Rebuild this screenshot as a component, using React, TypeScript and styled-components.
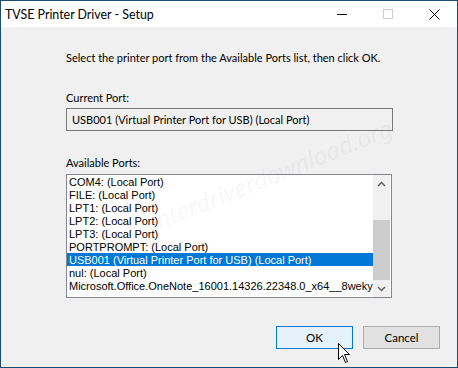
import React from "react";
import styled, { createGlobalStyle } from "styled-components";

const GlobalStyle = createGlobalStyle`
  html, body { margin: 0; padding: 0; background: #f0f0f0; }
  * { box-sizing: border-box; }
`;

const Window = styled.div`
  position: relative;
  width: 458px;
  height: 368px;
  border: 1px solid #1b4d72;
  background: #f0f0f0;
  display: flex;
  flex-direction: column;
  overflow: hidden;
  font-family: Lato, "Noto Sans", sans-serif;
  font-size: 11px;
  color: #000;
`;

const TitleBar = styled.div`
  height: 26px;
  background: #fff;
  display: flex;
  align-items: center;
  flex-shrink: 0;
`;

const Title = styled.div`
  flex: 1;
  padding-left: 4px;
  font-size: 12.4px;
  white-space: nowrap;
`;

const CaptionButton = styled.div`
  width: 46px;
  height: 26px;
  display: flex;
  align-items: center;
  justify-content: center;
`;

const Body = styled.div`
  flex: 1;
  display: flex;
  flex-direction: column;
  padding: 0 17px 0 65px;
`;

const Label = styled.div<{ $top: number }>`
  margin-top: ${(p) => p.$top}px;
  line-height: 16px;
  height: 16px;
  white-space: nowrap;
`;

const ReadOnlyBox = styled.div`
  margin-top: 2px;
  width: 327px;
  height: 23px;
  border: 1px solid #7a7a7a;
  background: #f0f0f0;
  display: flex;
  align-items: center;
  padding-left: 5px;
  white-space: nowrap;
`;

const ListBox = styled.div`
  margin-top: 3px;
  width: 326px;
  height: 124px;
  border: 1px solid #828790;
  background: #fff;
  display: flex;
  font-family: "Liberation Sans", Arial, sans-serif;
  font-size: 11px;
`;

const Items = styled.div`
  flex: 1;
  min-width: 0;
  overflow: hidden;
`;

const Item = styled.div<{ $selected?: boolean }>`
  height: 13px;
  line-height: 14px;
  padding-left: 2px;
  white-space: nowrap;
  background: ${(p) => (p.$selected ? "#0078d7" : "transparent")};
  color: ${(p) => (p.$selected ? "#fff" : "#000")};
`;

const ScrollBar = styled.div`
  width: 17px;
  flex-shrink: 0;
  margin-right: 1px;
  background: #f0f0f0;
  display: flex;
  flex-direction: column;
`;

const ScrollArrow = styled.div`
  height: 17px;
  display: flex;
  align-items: center;
  justify-content: center;
`;

const Track = styled.div`
  flex: 1;
  display: flex;
  flex-direction: column;
  justify-content: flex-end;
`;

const Thumb = styled.div`
  height: 60px;
  background: #cdcdcd;
`;

const ButtonRow = styled.div`
  margin-top: auto;
  margin-bottom: 18px;
  display: flex;
  justify-content: flex-end;
  gap: 10px;
`;

const Button = styled.div<{ $default?: boolean }>`
  width: 77px;
  height: 23px;
  display: flex;
  align-items: center;
  justify-content: center;
  font-size: 11.5px;
  border: 1px solid ${(p) => (p.$default ? "#0078d7" : "#adadad")};
  background: ${(p) => (p.$default ? "#e5f1fb" : "#e1e1e1")};
`;

const Watermark = styled.div`
  position: absolute;
  left: 75px;
  top: 241px;
  height: 24px;
  line-height: 24px;
  transform: rotate(-22deg);
  transform-origin: left center;
  font-family: "Noto Sans", sans-serif;
  font-style: italic;
  font-size: 24px;
  color: rgba(0, 0, 0, 0.055);
  white-space: nowrap;
  pointer-events: none;
`;

const Cursor = styled.svg`
  position: absolute;
  left: 337px;
  top: 342px;
`;

const items = [
  "COM4: (Local Port)",
  "FILE: (Local Port)",
  "LPT1: (Local Port)",
  "LPT2: (Local Port)",
  "LPT3: (Local Port)",
  "PORTPROMPT: (Local Port)",
  "USB001 (Virtual Printer Port for USB) (Local Port)",
  "nul: (Local Port)",
  "Microsoft.Office.OneNote_16001.14326.22348.0_x64__8wekyb3d8bbwe",
];

export default function App() {
  return (
    <>
      <GlobalStyle />
      <Window>
        <TitleBar>
          <Title>TVSE Printer Driver - Setup</Title>
          <CaptionButton>
            <svg width="10" height="10" viewBox="0 0 10 10">
              <line x1="0" y1="5.5" x2="10" y2="5.5" stroke="#000" strokeWidth="1" />
            </svg>
          </CaptionButton>
          <CaptionButton>
            <svg width="10" height="10" viewBox="0 0 10 10">
              <rect x="0.5" y="0.5" width="9" height="9" fill="none" stroke="#cccccc" strokeWidth="1" />
            </svg>
          </CaptionButton>
          <CaptionButton>
            <svg width="11" height="11" viewBox="0 0 11 11">
              <path d="M0.5 0.5 L10.5 10.5 M10.5 0.5 L0.5 10.5" stroke="#000" strokeWidth="1" />
            </svg>
          </CaptionButton>
        </TitleBar>
        <Body>
          <Label $top={23}>Select the printer port from the Available Ports list, then click OK.</Label>
          <Label $top={24}>Current Port:</Label>
          <ReadOnlyBox>USB001 (Virtual Printer Port for USB) (Local Port)</ReadOnlyBox>
          <Label $top={24}>Available Ports:</Label>
          <ListBox>
            <Items>
              {items.map((t, i) => (
                <Item key={t} $selected={i === 6}>
                  {t}
                </Item>
              ))}
            </Items>
            <ScrollBar>
              <ScrollArrow>
                <svg width="9" height="6" viewBox="0 0 9 6">
                  <path d="M1 5 L4.5 1.5 L8 5" fill="none" stroke="#606060" strokeWidth="1.5" />
                </svg>
              </ScrollArrow>
              <Track>
                <Thumb />
              </Track>
              <ScrollArrow>
                <svg width="9" height="6" viewBox="0 0 9 6">
                  <path d="M1 1 L4.5 4.5 L8 1" fill="none" stroke="#606060" strokeWidth="1.5" />
                </svg>
              </ScrollArrow>
            </ScrollBar>
          </ListBox>
          <ButtonRow>
            <Button $default>OK</Button>
            <Button>Cancel</Button>
          </ButtonRow>
        </Body>
        <Watermark>www.printerdriverdownload.org</Watermark>
        <Cursor width="13" height="21" viewBox="0 0 13 21">
          <path d="M0.5 0.5 L0.5 16.5 L4.5 12.5 L7.5 19.5 L9.5 18.5 L6.5 11.5 L11.5 11.5 Z" fill="#fff" stroke="#000" strokeWidth="1" strokeLinejoin="miter" />
        </Cursor>
      </Window>
    </>
  );
}
